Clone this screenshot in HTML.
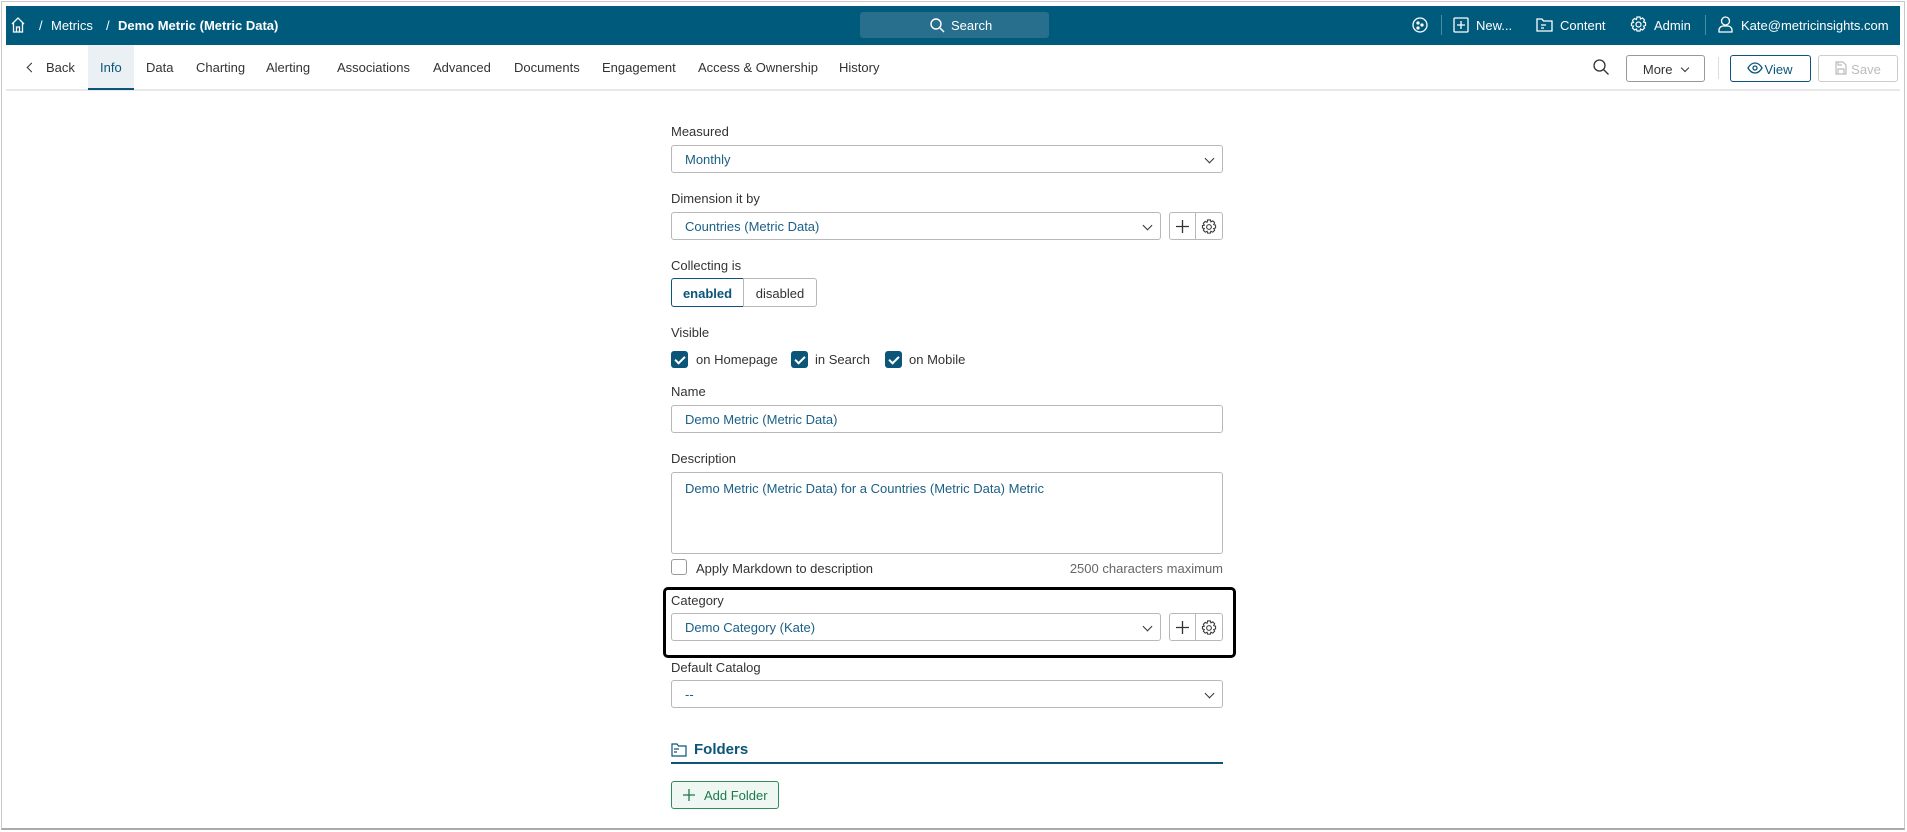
<!DOCTYPE html>
<html><head><meta charset="utf-8"><style>
*{box-sizing:border-box;margin:0;padding:0}
body{width:1907px;height:832px;background:#fff;font-family:"Liberation Sans",sans-serif;font-size:13px;color:#333;position:relative;overflow:hidden}
.frame{position:absolute;left:1px;top:1px;width:1904px;height:829px;border:1px solid #c8c8c8;border-bottom:2px solid #aaa}
.hdr{position:absolute;left:6px;top:6px;width:1894px;height:39px;background:#005a7c;color:#fff}
.a{position:absolute}
.ht{position:absolute;top:12px;font-size:13px;color:#fff;white-space:nowrap}
.tabs{position:absolute;left:6px;top:45px;width:1894px;height:46px;border-bottom:2px solid #e8e8e8}
.tab{position:absolute;top:15px;font-size:13px;color:#333;white-space:nowrap}
.lbl{position:absolute;left:671px;font-size:13px;color:#333}
.sel{position:absolute;left:671px;width:552px;height:28px;border:1px solid #b8b8b8;border-radius:3px;color:#1a5f85;padding:6px 13px;font-size:13px}
.chev{position:absolute;right:9px;top:9px;width:7px;height:7px;border-right:1.3px solid #333;border-bottom:1.3px solid #333;transform:rotate(45deg)}
.ib{position:absolute;width:27px;height:28px;border:1px solid #b8b8b8}
.cb{position:absolute;width:17px;height:17px;border-radius:3px;background:#0a5578}
.cb:after{content:"";position:absolute;left:6px;top:3px;width:4px;height:8px;border-right:2px solid #fff;border-bottom:2px solid #fff;transform:rotate(45deg)}
.btn{position:absolute;height:27px;border:1px solid #b8b8b8;border-radius:3px;font-size:13px;padding:6px 0;text-align:center}
</style></head><body>
<div class="frame"></div>
<div class="hdr">
 <svg class="a" style="left:5px;top:11px" width="14" height="16" viewBox="0 0 14 16" fill="none" stroke="#fff" stroke-width="1.3"><path d="M1 7 7 1l6 6M2.5 6v9h9V6M5.5 15v-5h3v5"/></svg>
 <span class="ht" style="left:33px">/</span>
 <span class="ht" style="left:45px">Metrics</span>
 <span class="ht" style="left:100px">/</span>
 <span class="ht" style="left:112px;font-weight:bold">Demo Metric (Metric Data)</span>
 <div class="a" style="left:854px;top:6px;width:189px;height:26px;background:#276f8d;border-radius:3px"></div>
 <svg class="a" style="left:924px;top:12px" width="15" height="15" viewBox="0 0 15 15" fill="none" stroke="#fff" stroke-width="1.4"><circle cx="6" cy="6" r="5"/><path d="M10 10l4 4"/></svg>
 <span class="ht" style="left:945px">Search</span>
 <svg class="a" style="left:1406px;top:11px" width="16" height="16" viewBox="0 0 16 16" fill="none" stroke="#fff" stroke-width="1.3"><circle cx="8" cy="8" r="7"/><circle cx="6" cy="6" r="1" fill="#fff"/><circle cx="10" cy="8" r="1" fill="#fff"/><circle cx="6" cy="11" r="1" fill="#fff"/></svg>
 <div class="a" style="left:1435px;top:9px;width:1px;height:20px;background:#4d8aa3"></div>
 <svg class="a" style="left:1447px;top:11px" width="16" height="16" viewBox="0 0 16 16" fill="none" stroke="#fff" stroke-width="1.3"><rect x="1" y="1" width="14" height="14" rx="1"/><path d="M8 4v8M4 8h8"/></svg>
 <span class="ht" style="left:1470px">New...</span>
 <svg class="a" style="left:1530px;top:11px" width="17" height="15" viewBox="0 0 17 15" fill="none" stroke="#fff" stroke-width="1.3"><path d="M1 2h5l1.5 2H16v10H1z"/><path d="M5 8h5M5 11h3"/></svg>
 <span class="ht" style="left:1554px">Content</span>
 <svg class="a" style="left:1624px;top:10px" width="17" height="17" viewBox="0 0 17 17" fill="none" stroke="#fff" stroke-width="1.2"><circle cx="8.5" cy="8.5" r="2.5"/><path d="M7 1h3l.5 2 2-1 2 2-1 2 2 .5v3l-2 .5 1 2-2 2-2-1-.5 2H7l-.5-2-2 1-2-2 1-2-2-.5V7l2-.5-1-2 2-2 2 1z"/></svg>
 <span class="ht" style="left:1648px">Admin</span>
 <div class="a" style="left:1699px;top:9px;width:1px;height:20px;background:#4d8aa3"></div>
 <svg class="a" style="left:1712px;top:10px" width="15" height="17" viewBox="0 0 15 17" fill="none" stroke="#fff" stroke-width="1.3"><circle cx="7.5" cy="5" r="4"/><path d="M1 16v-2c0-2 2-4 4-4h5c2 0 4 2 4 4v2z"/></svg>
 <span class="ht" style="left:1735px">Kate@metricinsights.com</span>
</div>
<div class="tabs">
 <div class="a" style="left:82px;top:0;width:46px;height:45px;background:#eaf0f4;border-bottom:2px solid #0a5578"></div>
 <div class="a" style="left:22px;top:19px;width:7px;height:7px;border-left:1.3px solid #333;border-bottom:1.3px solid #333;transform:rotate(45deg)"></div>
 <span class="tab" style="left:40px">Back</span>
 <span class="tab" style="left:94px;color:#0a5578">Info</span>
 <span class="tab" style="left:140px">Data</span>
 <span class="tab" style="left:190px">Charting</span>
 <span class="tab" style="left:260px">Alerting</span>
 <span class="tab" style="left:331px">Associations</span>
 <span class="tab" style="left:427px">Advanced</span>
 <span class="tab" style="left:508px">Documents</span>
 <span class="tab" style="left:596px">Engagement</span>
 <span class="tab" style="left:692px">Access &amp; Ownership</span>
 <span class="tab" style="left:833px">History</span>
 <svg class="a" style="left:1587px;top:14px" width="16" height="16" viewBox="0 0 16 16" fill="none" stroke="#333" stroke-width="1.3"><circle cx="6.5" cy="6.5" r="5.5"/><path d="M10.5 10.5l5 5"/></svg>
 <div class="btn" style="left:1620px;top:10px;width:79px;border-color:#999">More <span style="display:inline-block;width:6px;height:6px;border-right:1.2px solid #333;border-bottom:1.2px solid #333;transform:rotate(45deg);margin:0 0 3px 6px"></span></div>
 <div class="a" style="left:1712px;top:12px;width:1px;height:22px;background:#ddd"></div>
 <div class="btn" style="left:1724px;top:10px;width:81px;border-color:#0a5578;color:#0a5578;padding-left:16px">View</div>
 <svg class="a" style="left:1741px;top:17px" width="16" height="12" viewBox="0 0 16 12" fill="none" stroke="#0a5578" stroke-width="1.3"><path d="M1 6c2-3.5 4.5-5 7-5s5 1.5 7 5c-2 3.5-4.5 5-7 5s-5-1.5-7-5z"/><circle cx="8" cy="6" r="2"/></svg>
 <div class="btn" style="left:1812px;top:10px;width:80px;border-color:#ccc;color:#bbb;padding-left:16px">Save</div>
 <svg class="a" style="left:1829px;top:16px" width="12" height="14" viewBox="0 0 12 14" fill="none" stroke="#bbb" stroke-width="1.2"><path d="M1 1h7l3 3v9H1z"/><path d="M3 13V8h6v5M3 1v3h4"/></svg>
</div>

<div class="lbl" style="top:124px">Measured</div>
<div class="sel" style="top:145px">Monthly<div class="chev"></div></div>

<div class="lbl" style="top:191px">Dimension it by</div>
<div class="sel" style="top:212px;width:490px">Countries (Metric Data)<div class="chev"></div></div>
<div class="ib" style="left:1169px;top:212px;border-radius:3px 0 0 3px"><svg style="position:absolute;left:6px;top:7px" width="13" height="13" stroke="#333" stroke-width="1.3"><path d="M6.5 0v13M0 6.5h13"/></svg></div>
<div class="ib" style="left:1195px;top:212px;border-radius:0 3px 3px 0;width:28px"><svg style="position:absolute;left:5px;top:6px" width="16" height="16" viewBox="0 0 17 17" fill="none" stroke="#333" stroke-width="1.1"><circle cx="8.5" cy="8.5" r="2.5"/><path d="M7 1h3l.5 2 2-1 2 2-1 2 2 .5v3l-2 .5 1 2-2 2-2-1-.5 2H7l-.5-2-2 1-2-2 1-2-2-.5V7l2-.5-1-2 2-2 2 1z"/></svg></div>

<div class="lbl" style="top:258px">Collecting is</div>
<div class="btn" style="left:671px;top:278px;width:73px;height:29px;border-color:#0a5578;color:#0a5578;font-weight:bold;border-radius:3px 0 0 3px;padding-top:7px">enabled</div>
<div class="btn" style="left:743px;top:278px;width:74px;height:29px;border-radius:0 3px 3px 0;padding-top:7px;color:#333">disabled</div>

<div class="lbl" style="top:325px">Visible</div>
<div class="cb" style="left:671px;top:351px"></div><div class="lbl" style="left:696px;top:352px">on Homepage</div>
<div class="cb" style="left:791px;top:351px"></div><div class="lbl" style="left:815px;top:352px">in Search</div>
<div class="cb" style="left:885px;top:351px"></div><div class="lbl" style="left:909px;top:352px">on Mobile</div>

<div class="lbl" style="top:384px">Name</div>
<div class="sel" style="top:405px">Demo Metric (Metric Data)</div>

<div class="lbl" style="top:451px">Description</div>
<div class="sel" style="top:472px;height:82px;padding-top:8px">Demo Metric (Metric Data) for a Countries (Metric Data) Metric</div>
<div class="a" style="left:671px;top:559px;width:16px;height:16px;border:1px solid #999;border-radius:3px"></div>
<div class="lbl" style="left:696px;top:561px">Apply Markdown to description</div>
<div class="a" style="left:1000px;top:561px;width:223px;text-align:right;color:#666">2500 characters maximum</div>

<div class="a" style="left:663px;top:587px;width:573px;height:71px;border:3px solid #000;border-radius:5px"></div>
<div class="lbl" style="top:593px">Category</div>
<div class="sel" style="top:613px;width:490px">Demo Category (Kate)<div class="chev"></div></div>
<div class="ib" style="left:1169px;top:613px;border-radius:3px 0 0 3px"><svg style="position:absolute;left:6px;top:7px" width="13" height="13" stroke="#333" stroke-width="1.3"><path d="M6.5 0v13M0 6.5h13"/></svg></div>
<div class="ib" style="left:1195px;top:613px;border-radius:0 3px 3px 0;width:28px"><svg style="position:absolute;left:5px;top:6px" width="16" height="16" viewBox="0 0 17 17" fill="none" stroke="#333" stroke-width="1.1"><circle cx="8.5" cy="8.5" r="2.5"/><path d="M7 1h3l.5 2 2-1 2 2-1 2 2 .5v3l-2 .5 1 2-2 2-2-1-.5 2H7l-.5-2-2 1-2-2 1-2-2-.5V7l2-.5-1-2 2-2 2 1z"/></svg></div>

<div class="lbl" style="top:660px">Default Catalog</div>
<div class="sel" style="top:680px">--<div class="chev"></div></div>

<svg class="a" style="left:671px;top:743px" width="16" height="14" viewBox="0 0 16 14" fill="none" stroke="#0a5578" stroke-width="1.2"><path d="M1 1h5l1.5 2H15v10H1z"/><path d="M3 6h5M3 9h3"/></svg>
<div class="a" style="left:694px;top:741px;font-size:15px;font-weight:bold;color:#0a5578">Folders</div>
<div class="a" style="left:671px;top:762px;width:552px;height:1.5px;background:#0a5578"></div>
<div class="btn" style="left:671px;top:781px;width:108px;height:28px;border-color:#2f8a5c;background:#eef7f2;color:#1f7a4a;text-align:left;padding-left:32px">Add Folder</div>
<svg class="a" style="left:683px;top:789px" width="12" height="12" stroke="#1f7a4a" stroke-width="1.3"><path d="M6 0v12M0 6h12"/></svg>
</body></html>
